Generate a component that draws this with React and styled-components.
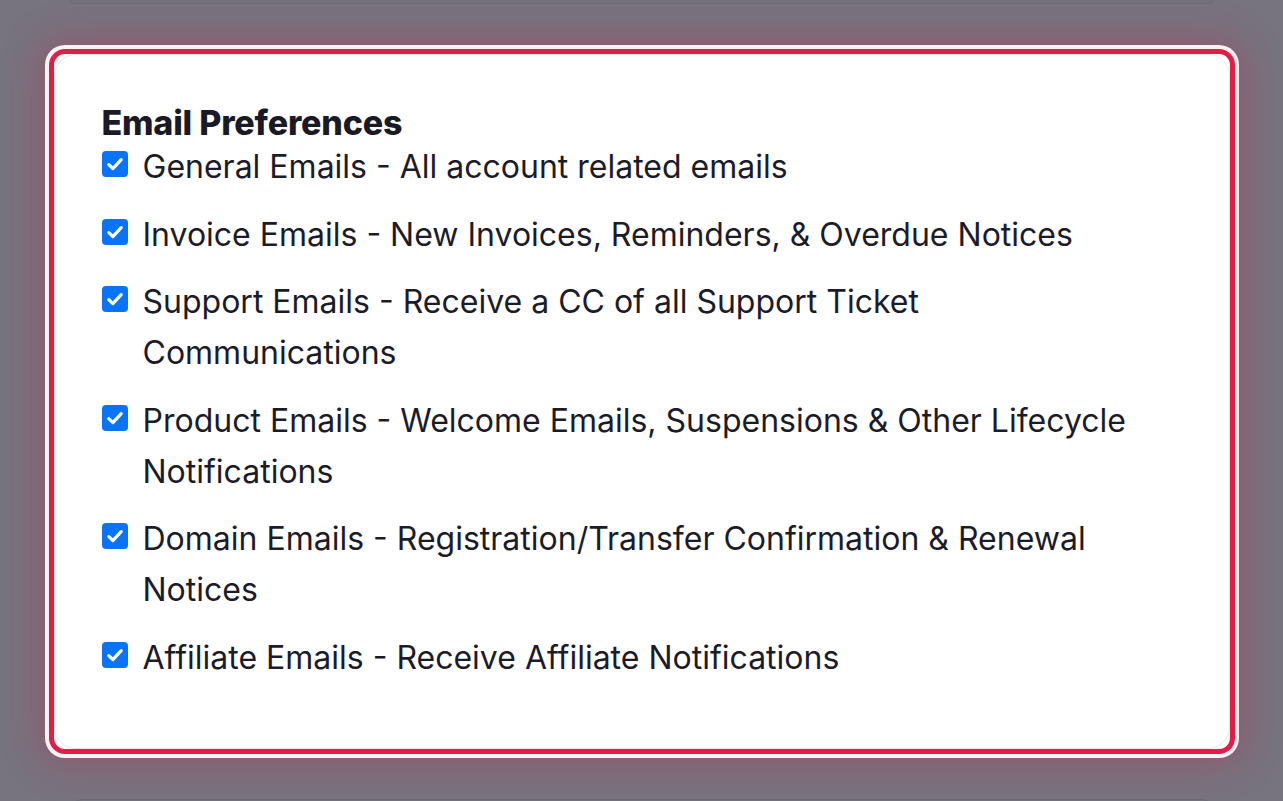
import React from "react";
import styled, { createGlobalStyle } from "styled-components";

const GlobalStyle = createGlobalStyle`
  html, body {
    margin: 0;
    padding: 0;
    background: #77747f;
    overflow: hidden;
  }
  body {
    font-family: Inter, "Noto Sans", sans-serif;
    color: #1c1b29;
  }
`;

const Page = styled.div`
  height: 801px;
  display: flex;
  flex-direction: column;
  align-items: center;
  gap: 41px;
`;

const Ghost = styled.div`
  width: 1140px;
  height: ${(p) => p.$h}px;
  flex: none;
  background: #74717c;
  border: 1px solid #6c6975;
  border-radius: ${(p) => (p.$top ? "0 0 12px 12px" : "12px 12px 0 0")};
  border-${(p) => (p.$top ? "top" : "bottom")}: none;
`;

const Ring = styled.div`
  width: 1194px;
  box-sizing: border-box;
  padding: 4px;
  flex: none;
  background: #f6f2f4;
  border-radius: 20px;
  box-shadow: 0 0 36px 8px rgba(190, 40, 80, 0.32);
`;

const Frame = styled.div`
  border: 5px solid #e11d48;
  border-radius: 16px;
  background: #fff;
  overflow: hidden;
`;

const Card = styled.section`
  border-radius: 22px;
  border: 1px solid #e6e5ec;
  background: #fff;
  padding: 50px 47px 65px;
`;

const Title = styled.h3`
  margin: 0;
  font-size: 34px;
  line-height: 36px;
  font-weight: 800;
  letter-spacing: -0.2px;
  color: #1a1926;
`;

const List = styled.ul`
  list-style: none;
  margin: 0;
  padding: 0;
  display: flex;
  flex-direction: column;
  gap: 16.5px;
`;

const Item = styled.li`
  display: flex;
  align-items: flex-start;
  gap: 15px;
  font-size: 32px;
  line-height: 51px;
  max-width: 1080px;
`;

const Box = styled.span`
  flex: none;
  width: 26px;
  height: 26px;
  margin-top: 10px;
  border-radius: 4px;
  background: #0a74f8;
  display: flex;
  align-items: center;
  justify-content: center;
`;

const Check = () => (
  <Box>
    <svg width="18" height="18" viewBox="0 0 18 18" fill="none">
      <path d="M2.8 9.6 L6.9 13.6 L15.2 4.6" stroke="#fff" strokeWidth="3.2" strokeLinecap="round" strokeLinejoin="round" />
    </svg>
  </Box>
);

const prefs = [
  ["General Emails - All account related emails"],
  ["Invoice Emails - New Invoices, Reminders, & Overdue Notices"],
  ["Support Emails - Receive a CC of all Support Ticket", "Communications"],
  ["Product Emails - Welcome Emails, Suspensions & Other Lifecycle", "Notifications"],
  ["Domain Emails - Registration/Transfer Confirmation & Renewal", "Notices"],
  ["Affiliate Emails - Receive Affiliate Notifications"],
];

export default function App() {
  return (
    <>
      <GlobalStyle />
      <Page>
        <Ghost $top $h={3} />
        <Ring>
          <Frame>
            <Card>
              <Title>Email Preferences</Title>
              <List>
                {prefs.map(([first, rest]) => (
                  <Item key={first}>
                    <Check />
                    <span>
                      {first}
                      {rest && (
                        <>
                          <br />
                          {rest}
                        </>
                      )}
                    </span>
                  </Item>
                ))}
              </List>
            </Card>
          </Frame>
        </Ring>
        <Ghost $h={10} />
      </Page>
    </>
  );
}
